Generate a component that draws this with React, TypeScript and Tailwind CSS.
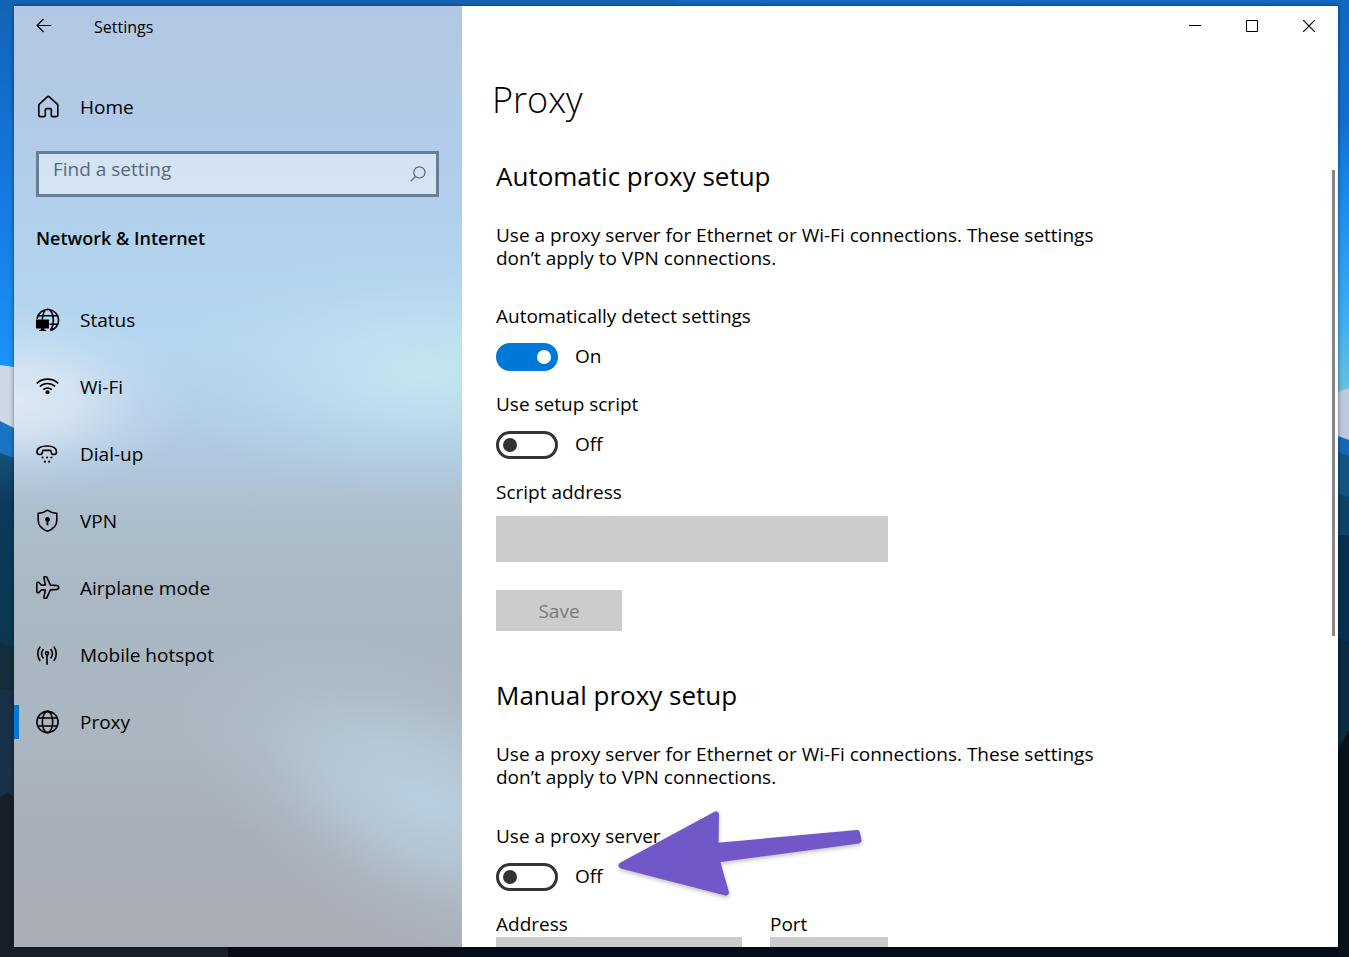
import type { ReactNode } from 'react';
import { useState } from 'react';

const strokeProps = {
  fill: 'none',
  stroke: 'currentColor',
  strokeWidth: 1.6,
  strokeLinejoin: 'round' as const,
};

function Icon({ children }: { children: ReactNode }) {
  return (
    <svg viewBox="0 0 24 24" className="size-6 shrink-0" aria-hidden="true" {...strokeProps}>
      {children}
    </svg>
  );
}

const HomeIcon = () => (
  <Icon>
    <path d="M2.800 9.700 11.300 1.800a1.500 1.500 0 0 1 2 0l8.500 7.900v10.200a1.700 1.700 0 0 1-1.700 1.700h-3.600a1.200 1.200 0 0 1-1.200-1.200v-5.600a1.200 1.200 0 0 0-1.200-1.200h-3.600a1.200 1.200 0 0 0-1.200 1.200v5.600a1.200 1.200 0 0 1-1.200 1.200H4.500a1.700 1.700 0 0 1-1.700-1.700z" />
  </Icon>
);

const StatusIcon = () => (
  <Icon>
    <path d="M1.100 10.800A10.800 10.800 0 0 1 22.600 12c0 5-3.400 9.400-8.200 10.400M2.200 7.800h19.500M13.500 16.200h8.400M6.300 11.500C6.600 5.500 8.800 1.200 11.800 1.200c3.200 0 5.500 4.800 5.500 10.800 0 4.800-1.200 8.500-3.200 10.200" />
    <path d="M0 11.500h13v9H8.400v1.400h1.800V23H3v-1.100h1.800v-1.400H0z" fill="currentColor" stroke="none" />
  </Icon>
);

const WifiIcon = () => (
  <Icon>
    <path d="M.700 8.300a16 16 0 0 1 21.600 0M3.900 11.500a11.300 11.300 0 0 1 15.200 0M7.200 14.700a6.500 6.500 0 0 1 8.600 0" />
    <circle cx="11.500" cy="17.200" r="2" fill="currentColor" stroke="none" />
  </Icon>
);

const DialUpIcon = () => (
  <Icon>
    <path d="M1 9.700C1 5.900 5 4 10.800 4s9.700 1.900 9.700 5.700c0 1.800-.8 2.800-2.300 2.800-1.900 0-2.700-.6-2.900-1.900l-.3-1.400c-.1-.6-.4-.8-.9-.8H7.500c-.5 0-.8.2-.9.8l-.3 1.400c-.2 1.300-1 1.900-2.900 1.900-1.500 0-2.400-1-2.400-2.800z" />
    <g fill="currentColor" stroke="none">
      <circle cx="6.600" cy="15.500" r="1.100" />
      <circle cx="11" cy="15.500" r="1.100" />
      <circle cx="15.400" cy="15.500" r="1.100" />
      <circle cx="8.900" cy="19.700" r="1.100" />
      <circle cx="13.200" cy="19.700" r="1.100" />
    </g>
  </Icon>
);

const VpnIcon = () => (
  <Icon>
    <path d="M11.500 1.200c2.700 2 5.800 3.100 9.300 3.200v7.200c0 5-3.200 8.500-9.300 10.700-6.100-2.200-9.300-5.700-9.300-10.700V4.400c3.500-.1 6.600-1.200 9.300-3.200z" />
    <path d="M11.500 8a2.500 2.500 0 0 1 .9 4.800v3.500h-1.800v-3.500A2.500 2.500 0 0 1 11.500 8z" fill="currentColor" stroke="none" />
  </Icon>
);

const AirplaneIcon = () => (
  <Icon>
    <path d="M8 1.900c-.2-.7.200-1.200.9-1.200h.9c.5 0 .9.200 1.100.7l3.600 7.700 6.100.4c1.300.1 2.100.9 2.100 2s-.8 1.900-2.100 2l-6.100.4-3.600 7.700c-.2.500-.6.700-1.100.7h-.9c-.7 0-1.100-.5-.9-1.200l1.300-7-3.900-.3-2.200 2.500c-.2.200-.4.300-.7.300h-.9c-.5 0-.8-.4-.8-.9V7.300c0-.5.300-.9.800-.9h.9c.3 0 .5.100.7.300l2.200 2.500 3.900-.3z" />
  </Icon>
);

const HotspotIcon = () => (
  <Icon>
    <path d="M4.200 3.600a12 12 0 0 0 0 14.500M17.800 3.600a12 12 0 0 1 0 14.500M7.400 6a7.800 7.800 0 0 0 0 9.500M14.600 6a7.800 7.800 0 0 1 0 9.500M11 12v9.700" />
    <circle cx="11" cy="10.300" r="1.500" />
  </Icon>
);

const GlobeIcon = () => (
  <Icon>
    <circle cx="11.500" cy="12" r="10.600" />
    <ellipse cx="11.500" cy="12" rx="5.200" ry="10.600" />
    <path d="M1.800 8h19.400M1.800 16h19.400" />
  </Icon>
);

const navItems = [
  { label: 'Status', icon: StatusIcon },
  { label: 'Wi-Fi', icon: WifiIcon },
  { label: 'Dial-up', icon: DialUpIcon },
  { label: 'VPN', icon: VpnIcon },
  { label: 'Airplane mode', icon: AirplaneIcon },
  { label: 'Mobile hotspot', icon: HotspotIcon },
  { label: 'Proxy', icon: GlobeIcon },
];

function Wallpaper() {
  return (
    <svg
      viewBox="0 0 1349 957"
      preserveAspectRatio="none"
      className="absolute inset-0 h-full w-full"
      aria-hidden="true"
    >
      <defs>
        <linearGradient id="sky-left" x1="0" y1="0" x2="0" y2="1">
          <stop offset="0" stopColor="#1264b4" />
          <stop offset="0.4" stopColor="#1474d8" />
          <stop offset="1" stopColor="#1b93fb" />
        </linearGradient>
        <linearGradient id="sky-right" x1="0" y1="0" x2="0" y2="1">
          <stop offset="0" stopColor="#1068c0" />
          <stop offset="0.3" stopColor="#136fcf" />
          <stop offset="0.5" stopColor="#1b8bee" />
          <stop offset="0.8" stopColor="#41adf2" />
          <stop offset="1" stopColor="#6cc4de" />
        </linearGradient>
        <linearGradient id="hills" x1="0" y1="0" x2="0" y2="1">
          <stop offset="0" stopColor="#14527a" />
          <stop offset="0.2" stopColor="#0b3a5c" />
          <stop offset="0.7" stopColor="#0c3850" />
          <stop offset="1" stopColor="#122f40" />
        </linearGradient>
      </defs>
      <rect width="1349" height="957" fill="#070d18" />
      <rect width="674" height="370" fill="url(#sky-left)" />
      <rect x="674" width="675" height="400" fill="url(#sky-right)" />
      <path d="M0 365l14 2v70H0z" fill="#ccd8e4" />
      <path d="M0 421l14 7v40H0z" fill="#1a74c4" />
      <path d="M0 453l14 5v250H0z" fill="url(#hills)" />
      <path d="M0 643l14 5v160H0z" fill="#132f3e" />
      <path d="M0 690h14v120H0z" fill="#193049" />
      <path d="M0 798l8-6 6 6v149h214v10H0z" fill="#17202a" />
      <path d="M1338 392l11-4v70h-11z" fill="#bcc8dc" />
      <path d="M1338 436l11 4v40h-11z" fill="#1668ba" />
      <path d="M1338 452l11 4v50h-11z" fill="#125583" />
      <path d="M1338 494l11 3v50h-11z" fill="#0d4369" />
      <path d="M1338 535h11v110h-11z" fill="#0a3153" />
      <path d="M1338 638l11 4v120h-11z" fill="#0a2b42" />
      <path d="M1338 750l11-20v227h-11z" fill="#08121a" />
    </svg>
  );
}

// Acrylic panel: the desktop showing through, heavily blurred.
function AcrylicBackdrop() {
  return (
    <svg
      viewBox="0 0 448 941"
      preserveAspectRatio="none"
      className="absolute inset-0 h-full w-full"
      aria-hidden="true"
    >
      <defs>
        <linearGradient id="acrylic" x1="0" y1="0" x2="0" y2="1">
          <stop offset="0" stopColor="#b2c8e2" />
          <stop offset="0.14" stopColor="#b1cbe8" />
          <stop offset="0.24" stopColor="#b1d1ed" />
          <stop offset="0.36" stopColor="#b5d6f0" />
          <stop offset="0.43" stopColor="#b3cee8" />
          <stop offset="0.48" stopColor="#b0c8de" />
          <stop offset="0.54" stopColor="#adbfcc" />
          <stop offset="0.62" stopColor="#a9b8c4" />
          <stop offset="0.78" stopColor="#abb6c0" />
          <stop offset="0.88" stopColor="#a8aeb8" />
          <stop offset="1" stopColor="#aaafb7" />
        </linearGradient>
        <radialGradient id="cloud">
          <stop offset="0" stopColor="#dfeaf4" stopOpacity="0.95" />
          <stop offset="0.35" stopColor="#dfeaf4" stopOpacity="0.7" />
          <stop offset="0.7" stopColor="#dfeaf4" stopOpacity="0.2" />
          <stop offset="1" stopColor="#dfeaf4" stopOpacity="0" />
        </radialGradient>
        <radialGradient id="aqua">
          <stop offset="0" stopColor="#c5e7ef" stopOpacity="0.95" />
          <stop offset="0.35" stopColor="#c2e4ef" stopOpacity="0.65" />
          <stop offset="0.7" stopColor="#c0e2f0" stopOpacity="0.2" />
          <stop offset="1" stopColor="#c0e2f0" stopOpacity="0" />
        </radialGradient>
        <radialGradient id="mist">
          <stop offset="0" stopColor="#b9d0e1" stopOpacity="0.95" />
          <stop offset="0.35" stopColor="#b9cfdf" stopOpacity="0.7" />
          <stop offset="0.7" stopColor="#b9cfdf" stopOpacity="0.2" />
          <stop offset="1" stopColor="#b9cfdf" stopOpacity="0" />
        </radialGradient>
      </defs>
      <rect width="448" height="941" fill="url(#acrylic)" />
      <ellipse cx="0" cy="395" rx="180" ry="95" fill="url(#cloud)" />
      <ellipse cx="410" cy="365" rx="260" ry="125" fill="url(#aqua)" />
      <ellipse cx="410" cy="795" rx="260" ry="135" fill="url(#mist)" transform="rotate(25 410 795)" />
    </svg>
  );
}

type ToggleProps = {
  id: string;
  label: string;
  checked: boolean;
  onChange: (value: boolean) => void;
};

function Toggle({ id, label, checked, onChange }: ToggleProps) {
  return (
    <div>
      <label htmlFor={id} className="block">
        {label}
      </label>
      <div className="mt-[15px] flex h-7 items-center gap-[17px]">
        <input
          id={id}
          type="checkbox"
          role="switch"
          checked={checked}
          onChange={(event) => onChange(event.target.checked)}
          className="flex h-7 w-[62px] appearance-none items-center rounded-full border-3 border-[#333333] bg-white px-1 before:block before:size-3.5 before:rounded-full before:bg-[#333333] before:content-[''] checked:justify-end checked:border-[#0078d7] checked:bg-[#0078d7] checked:before:bg-white"
        />
        <span className="pb-0.5">{checked ? 'On' : 'Off'}</span>
      </div>
    </div>
  );
}

function Sidebar() {
  const [active, setActive] = useState('Proxy');

  return (
    <aside className="relative w-[448px] shrink-0 overflow-hidden">
      <AcrylicBackdrop />
      <div className="relative">
        <div className="flex h-10 items-center gap-[42px] pl-[22px]">
          <button aria-label="Back" className="flex w-4">
            <svg viewBox="0 0 16 16" className="size-4" fill="none" stroke="currentColor" strokeWidth="1.200">
              <path d="M15.300 7.500H.8M7.500 1 1 7.500 7.500 14" />
            </svg>
          </button>
          <span className="pt-0.5 text-base leading-6">Settings</span>
        </div>

        <a href="#home" className="mt-7 flex h-[66px] items-center gap-5 pl-[22px]">
          <HomeIcon />
          Home
        </a>

        <div className="mt-[11px] mr-[23px] ml-[22px] flex h-[46px] border-3 border-[#667f97] bg-white/45">
          <input
            type="text"
            aria-label="Find a setting"
            placeholder="Find a setting"
            className="min-w-0 flex-1 bg-transparent pb-2.5 pl-3.5 outline-none placeholder:text-[#566b7c]"
          />
          <button aria-label="Search" className="flex w-9 items-center justify-center text-[#50657a]">
            <svg viewBox="0 0 16 16" className="size-4" fill="none" stroke="currentColor" strokeWidth="1.200">
              <circle cx="9.400" cy="6.400" r="5.600" />
              <path d="M5.500 10.500.7 15.300" />
            </svg>
          </button>
        </div>

        <h2 className="mt-[27px] pl-[22px] text-lg leading-7 font-semibold">Network &amp; Internet</h2>

        <nav className="mt-[34px]">
          {navItems.map(({ label, icon: ItemIcon }) => (
            <a
              key={label}
              href={`#${label.toLowerCase().replace(' ', '-')}`}
              onClick={() => setActive(label)}
              aria-current={active === label ? 'page' : undefined}
              className="flex h-[67px] items-center"
            >
              <span className={`h-[34px] w-[5px] ${active === label ? 'bg-[#0078d7]' : ''}`} />
              <span className="flex items-center gap-5 pl-[17px]">
                <ItemIcon />
                {label}
              </span>
            </a>
          ))}
        </nav>
      </div>
    </aside>
  );
}

function WindowControls() {
  return (
    <div className="flex h-10 justify-end pr-px">
      <button aria-label="Minimize" className="flex w-[57px] items-center justify-center">
        <svg viewBox="0 0 12 12" className="size-3" stroke="currentColor">
          <path d="M0 5.500h12" />
        </svg>
      </button>
      <button aria-label="Maximize" className="flex w-[57px] items-center justify-center">
        <svg viewBox="0 0 12 12" className="size-3" fill="none" stroke="currentColor">
          <path d="M.5.5h11v11H.5z" />
        </svg>
      </button>
      <button aria-label="Close" className="flex w-[57px] items-center justify-center">
        <svg viewBox="0 0 12 12" className="size-3" stroke="currentColor" strokeWidth="1.200">
          <path d="M0 0l12 12M12 0 0 12" />
        </svg>
      </button>
    </div>
  );
}

function PointerArrow() {
  return (
    <svg
      viewBox="0 0 250 92"
      className="pointer-events-none absolute top-[-16px] left-[120px] h-[92px] w-[250px] drop-shadow-[0_2px_2px_rgba(0,0,0,0.25)]"
      fill="#7157c8"
      stroke="#7157c8"
      strokeWidth="6"
      strokeLinejoin="round"
      aria-hidden="true"
    >
      <path d="M5.500 57.500 100 6.500l-.5 31.500 141.500-13 1.500 7.500-142 19 9.500 33z" />
    </svg>
  );
}

const description =
  'Use a proxy server for Ethernet or Wi-Fi connections. These settings don’t apply to VPN connections.';

export default function App() {
  const [autoDetect, setAutoDetect] = useState(true);
  const [setupScript, setSetupScript] = useState(false);
  const [proxyServer, setProxyServer] = useState(false);

  return (
    <div className="relative h-screen overflow-hidden pt-1.5 pr-[11px] pb-2.5 pl-3.5 font-['Segoe_UI','Open_Sans',sans-serif] text-[19px] leading-6 text-black">
      <Wallpaper />
      <div className="relative flex h-full shadow-[0_0_4px_rgba(0,0,0,0.5)]">
        <Sidebar />

        <main className="flex min-w-0 flex-1 flex-col bg-white">
          <WindowControls />
          <h1 className="mt-[30px] pl-[30px] text-4xl leading-12 font-light">Proxy</h1>

          <div className="flex min-h-0 flex-1">
            <div className="min-w-0 flex-1 overflow-y-auto pr-6 pb-12 pl-[34px] [scrollbar-width:none]">
              <section className="mt-[34px]">
                <h2 className="text-[26px] leading-9">Automatic proxy setup</h2>
                <p className="mt-[30px] max-w-[620px] leading-[23px]">{description}</p>
                <div className="mt-[34px] flex flex-col gap-[21px]">
                  <Toggle
                    id="auto-detect"
                    label="Automatically detect settings"
                    checked={autoDetect}
                    onChange={setAutoDetect}
                  />
                  <Toggle
                    id="setup-script"
                    label="Use setup script"
                    checked={setupScript}
                    onChange={setSetupScript}
                  />
                  <div>
                    <label htmlFor="script-address" className="block">
                      Script address
                    </label>
                    <input
                      id="script-address"
                      type="text"
                      disabled={!setupScript}
                      className="mt-3 block h-[46px] w-[392px] bg-[#cccccc] px-3"
                    />
                  </div>
                </div>
                <button disabled={!setupScript} className="mt-7 h-[41px] w-[126px] bg-[#cccccc] text-[#7a7a7a]">
                  Save
                </button>
              </section>

              <section className="mt-[46px]">
                <h2 className="text-[26px] leading-9">Manual proxy setup</h2>
                <p className="mt-[30px] max-w-[620px] leading-[23px]">{description}</p>
                <div className="relative mt-[35px]">
                  <Toggle
                    id="proxy-server"
                    label="Use a proxy server"
                    checked={proxyServer}
                    onChange={setProxyServer}
                  />
                  <PointerArrow />
                </div>
                <div className="mt-[21px] flex gap-7">
                  <div className="w-[246px]">
                    <label htmlFor="proxy-address" className="block">
                      Address
                    </label>
                    <input
                      id="proxy-address"
                      type="text"
                      disabled={!proxyServer}
                      className="mt-px block h-[46px] w-full bg-[#cccccc] px-3"
                    />
                  </div>
                  <div className="w-[118px]">
                    <label htmlFor="proxy-port" className="block">
                      Port
                    </label>
                    <input
                      id="proxy-port"
                      type="text"
                      disabled={!proxyServer}
                      className="mt-px block h-[46px] w-full bg-[#cccccc] px-3"
                    />
                  </div>
                </div>
              </section>
            </div>

            <div className="mt-[46px] mr-[3px] w-[3px]">
              <div className="h-3/5 bg-[#85858a]" />
            </div>
          </div>
        </main>
      </div>
    </div>
  );
}
